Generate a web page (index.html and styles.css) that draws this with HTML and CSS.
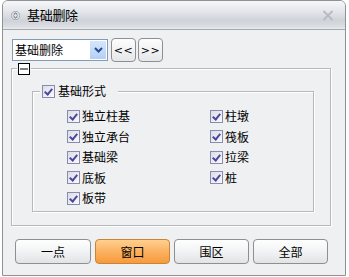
FILE: index.html
```html
<!DOCTYPE html>
<html>
<head>
<meta charset="utf-8">
<link rel="stylesheet" href="styles.css">
</head>
<body>
<div class="window">
  <div class="titlebar">
    <svg class="ticon" width="9" height="9" viewBox="0 0 9 9"><circle cx="4.5" cy="4.5" r="4.2" fill="#dfe2e6" stroke="#9aa0a8" stroke-width="0.8"/><path d="M2.6 3.8 L4.5 2 L6.4 3.8 M2.6 5.2 L4.5 7 L6.4 5.2" fill="none" stroke="#555" stroke-width="1"/></svg>
    <span class="title">基础删除</span>
    <svg class="close" width="12" height="11" viewBox="0 0 12 11"><path d="M1.5 1 L10.5 10 M10.5 1 L1.5 10" stroke="#b8bcc2" stroke-width="2"/></svg>
  </div>
  <div class="body">
    <div class="toolbar">
      <div class="select"><span class="sel-text">基础删除</span><span class="sel-btn"><svg width="9" height="6" viewBox="0 0 9 6"><path d="M1 1 L4.5 4.5 L8 1" fill="none" stroke="#2a4a8a" stroke-width="2"/></svg></span></div>
      <button class="nav">&lt;&lt;</button>
      <button class="nav">&gt;&gt;</button>
    </div>
    <div class="outer">
      <span class="collapse"><svg width="12" height="12" viewBox="0 0 12 12"><rect x="0.5" y="0.5" width="11" height="11" fill="#fff" stroke="#000"/><path d="M2 6 H10" stroke="#000"/></svg></span>
      <div class="inner">
        <div class="legend"><span class="cb"></span><span>基础形式</span></div>
        <div class="grid">
          <label class="item"><span class="cb"></span>独立柱基</label>
          <label class="item"><span class="cb"></span>柱墩</label>
          <label class="item"><span class="cb"></span>独立承台</label>
          <label class="item"><span class="cb"></span>筏板</label>
          <label class="item"><span class="cb"></span>基础梁</label>
          <label class="item"><span class="cb"></span>拉梁</label>
          <label class="item"><span class="cb"></span>底板</label>
          <label class="item"><span class="cb"></span>桩</label>
          <label class="item"><span class="cb"></span>板带</label>
        </div>
      </div>
    </div>
    <div class="actions">
      <button class="act first">一点</button>
      <button class="act active">窗口</button>
      <button class="act">围区</button>
      <button class="act">全部</button>
    </div>
  </div>
</div>
</body>
</html>
```

FILE: styles.css
```css
html, body {
  margin: 0;
  padding: 0;
  background: #ffffff;
}
body {
  font-family: "Noto Sans CJK SC", "Liberation Sans", sans-serif;
  font-size: 12px;
  color: #000;
}
.window {
  margin-left: 2px;
  width: 342px;
  height: 274px;
  border: 1px solid #8e9196;
  border-radius: 6px 6px 0 0;
  background: #eff0f2;
  overflow: hidden;
  display: flex;
  flex-direction: column;
}
.titlebar {
  height: 28px;
  flex: none;
  display: flex;
  align-items: center;
  background: linear-gradient(#f6f7f9 0%, #e4e7eb 35%, #cfd3d9 70%, #d9dce1 90%, #e9ebee 100%);
  border-bottom: 1px solid #a6aab0;
}
.ticon {
  margin-left: 8px;
  margin-right: 7px;
}
.title {
  font-size: 13px;
  line-height: 16px;
  letter-spacing: -0.3px;
}
.close {
  margin-left: auto;
  margin-right: 11px;
}
.body {
  flex: 1;
  padding: 8px 0 0 8px;
  display: flex;
  flex-direction: column;
}
.toolbar {
  display: flex;
  align-items: center;
  margin-left: 1px;
  height: 24px;
}
.select {
  width: 94px;
  height: 20px;
  border: 1px solid #7f9db9;
  background: #fff;
  display: flex;
  align-items: center;
  margin-right: 3px;
}
.sel-text {
  padding-left: 2px;
  flex: 1;
  line-height: 16px;
}
.sel-btn {
  width: 16px;
  height: 18px;
  margin-right: 1px;
  background: linear-gradient(#d6e6fb, #b4cff5);
  display: flex;
  align-items: center;
  justify-content: center;
}
.nav {
  width: 25px;
  height: 24px;
  margin: 0 2px 0 0;
  padding: 0;
  border: 1px solid #8c8f94;
  border-radius: 4px;
  background: linear-gradient(#fdfdfd, #e6e7e9);
  font-family: "DejaVu Sans", sans-serif;
  font-size: 11px;
  color: #000;
  letter-spacing: 0.5px;
}
.outer {
  position: relative;
  margin-top: 6px;
  width: 320px;
  height: 158px;
  border: 1px solid #b6b8bc;
  box-shadow: inset 1px 1px #fff, 1px 1px #fff;
  padding: 22px 0 0 20px;
  box-sizing: border-box;
}
.collapse {
  position: absolute;
  left: 5px;
  top: -6px;
  padding: 0 1px;
  background: #eff0f2;
  display: flex;
}
.inner {
  position: relative;
  width: 282px;
  height: 121px;
  border: 1px solid #b6b8bc;
  box-shadow: inset 1px 1px #fff, 1px 1px #fff;
  box-sizing: border-box;
}
.legend {
  position: absolute;
  left: 7px;
  top: -9px;
  width: 76px;
  height: 16px;
  background: #eff0f2;
  display: flex;
  align-items: center;
  padding-left: 2px;
  gap: 3px;
  line-height: 16px;
}
.cb {
  display: inline-block;
  width: 11px;
  height: 11px;
  border: 1px solid #8a8ab0;
  background: linear-gradient(135deg, #dcdce6, #fafafc) ;
  position: relative;
  flex: none;
}
.cb::after {
  content: "";
  position: absolute;
  left: 3px;
  top: 1px;
  width: 3px;
  height: 6px;
  border: solid #4848a0;
  border-width: 0 2px 2px 0;
  transform: rotate(40deg);
}
.grid {
  display: grid;
  grid-template-columns: 143px 100px;
  grid-auto-rows: 20.5px;
  padding: 14px 0 0 34px;
}
.item {
  display: flex;
  align-items: center;
  gap: 2px;
  line-height: 16px;
}
.actions {
  display: flex;
  gap: 4px;
  margin-top: 13px;
  margin-left: 4px;
}
.act {
  width: 75px;
  height: 25px;
  padding: 0;
  border: 1px solid #8c8f94;
  border-radius: 4px;
  background: linear-gradient(#fefefe, #f2f3f4 50%, #e2e3e5);
  font-family: "Noto Sans CJK SC", sans-serif;
  font-size: 12px;
  color: #000;
}
.act.first {
  width: 76px;
}
.act.active {
  border-color: #c8843a;
  background: linear-gradient(#ffd08e, #fbb262 50%, #f79a3a);
}
```
